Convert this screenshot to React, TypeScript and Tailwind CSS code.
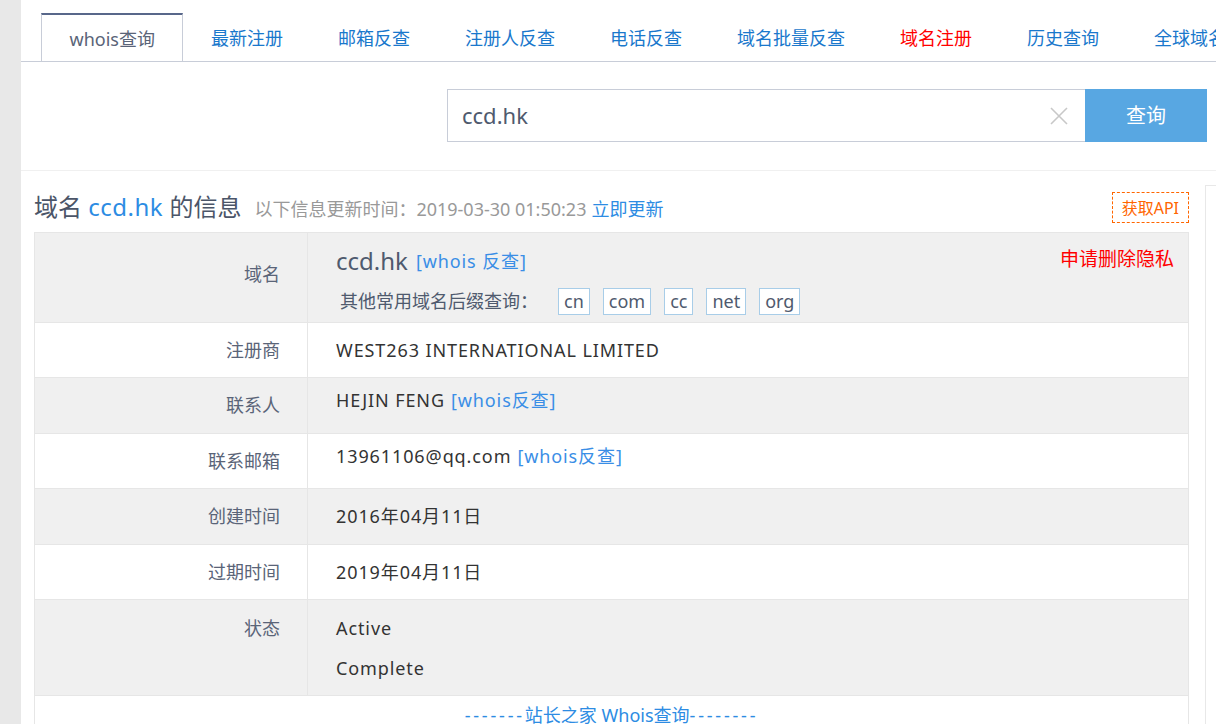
import React from "react";

const tabs = [
    {text: "whois查询", active: true},
    {text: "最新注册"},
    {text: "邮箱反查"},
    {text: "注册人反查"},
    {text: "电话反查"},
    {text: "域名批量反查"},
    {text: "域名注册", red: true},
    {text: "历史查询"},
    {text: "全球域名后缀"},
];

const suffixes = ["cn", "com", "cc", "net", "org"];

const Row = ({label, gray, children, top}: {label: string; gray?: boolean; children: React.ReactNode; top?: boolean}) => (
    <div className={`flex border-t border-[#e6e6e6] ${gray ? "bg-[#f0f0f0]" : "bg-white"}`}>
        <div
            className={`w-[272px] shrink-0 flex justify-end pr-[27px] text-[18px] text-[#5a6478] ${top ? "items-start pt-[8px] leading-[40px]" : "items-center"}`}>
            {label}
        </div>
        <div className="flex-1 border-l border-[#e6e6e6] pl-[28px] text-[18px] tracking-[0.05em] text-[#333]">
            {children}
        </div>
    </div>
);

export default function App() {
    return (
        <div
            className="flex min-h-[724px] w-[1216px] overflow-hidden bg-white font-['Noto_Sans','Noto_Sans_CJK_SC',sans-serif]">
            {/* left gray strip */}
            <div className="w-[21px] shrink-0 bg-[#e8e8e8]"/>

            <div className="flex-1 min-w-0">
                {/* tabs */}
                <div className="flex h-[62px] items-end border-b border-[#c8cdd8] pl-[20px] whitespace-nowrap overflow-hidden">
                    {tabs.map((tab, i) => (
                        <div
                            key={i}
                            className={
                                tab.active
                                    ? "h-[49px] -mb-px flex items-center px-[27.5px] pt-[2px] border-t-2 border-x border-t-[#58678a] border-x-[#c8cdd8] bg-white text-[18px] text-[#5a6478]"
                                    : `h-[49px] flex items-center px-[27.5px] pt-[3px] text-[18px] ${tab.red ? "text-[#f00]" : "text-[#1a78cc]"}`
                            }>
                            {tab.text}
                        </div>
                    ))}
                </div>

                {/* search */}
                <div className="border-b border-[#f0f0f0] pt-[27px] pb-[28px] pl-[426px]">
                    <div className="flex h-[53px]">
                        <div
                            className="flex w-[638px] items-center justify-between border border-[#c8cdd8] border-r-0 pl-[14px] pr-[16px]">
                            <span className="text-[22px] text-[#4f5a6e]">ccd.hk</span>
                            <svg width="20" height="20" viewBox="0 0 20 20" className="text-[#c8c8c8]">
                                <path d="M2 2 L18 18 M18 2 L2 18" stroke="currentColor" strokeWidth="1.6" fill="none"/>
                            </svg>
                        </div>
                        <div className="flex w-[122px] items-center justify-center bg-[#58a7e2] text-[20px] text-white">
                            查询
                        </div>
                    </div>
                </div>

                <div className="flex">
                    {/* main info */}
                    <div className="ml-[13px] w-[1155px] shrink-0">
                        <div className="flex h-[61px] items-center justify-between pt-[12px]">
                            <div className="flex items-baseline leading-[31px]">
                                <span className="text-[24px] text-[#4b5568]">域名 <span className="tracking-[0.5px] text-[#2d8ce3]">ccd.hk</span> 的信息</span>
                                <span className="ml-[13px] text-[18px] text-[#999]">以下信息更新时间：2019-03-30 01:50:23</span>
                                <span className="ml-[5px] text-[18px] text-[#2d8ce3]">立即更新</span>
                            </div>
                            <div
                                className="flex h-[31px] items-center border border-dashed border-[#ff6600] px-[9px] text-[16px] text-[#ff6600]">
                                获取API
                            </div>
                        </div>

                        <div className="border-x border-b border-[#e6e6e6]">
                            <div className="flex border-t border-[#e6e6e6] bg-[#f0f0f0]">
                                <div
                                    className="w-[272px] shrink-0 flex items-start justify-end pr-[27px] pt-[27px] leading-[28px] text-[18px] text-[#5a6478]">
                                    域名
                                </div>
                                <div className="relative flex-1 border-l border-[#e6e6e6] pl-[28px] pt-[12px] pb-[7px]">
                                    <div className="flex h-[32px] items-center">
                                        <span className="text-[24px] text-[#4f5a6e]">ccd.hk</span>
                                        <span className="ml-[8px] text-[18px] tracking-[0.05em] text-[#3a8ee6]">[whois 反查]</span>
                                    </div>
                                    <div className="mt-[11px] flex h-[27px] items-center">
                                        <span className="ml-[4px] text-[18px] text-[#4f5a6e]">其他常用域名后缀查询：</span>
                                        <div className="ml-[20px] flex gap-[13px]">
                                            {suffixes.map((s) => (
                                                <span
                                                    key={s}
                                                    className="flex h-[27px] items-center border border-[#a8cde8] bg-white px-[5px] text-[18px] text-[#4f5a6e]">
                                                    {s}
                                                </span>
                                            ))}
                                        </div>
                                    </div>
                                    <span className="absolute right-[14px] top-[10px] leading-[32px] text-[19px] text-[#f00]">申请删除隐私</span>
                                </div>
                            </div>

                            <Row label="注册商">
                                <div className="h-[54px] flex items-center">WEST263 INTERNATIONAL LIMITED</div>
                            </Row>
                            <Row label="联系人" gray>
                                <div className="h-[55px] flex items-center pb-[10px]">
                                    HEJIN FENG <span className="ml-[6px] text-[#3a8ee6]">[whois反查]</span>
                                </div>
                            </Row>
                            <Row label="联系邮箱">
                                <div className="h-[54px] flex items-center pb-[10px]">
                                    13961106@qq.com <span className="ml-[6px] text-[#3a8ee6]">[whois反查]</span>
                                </div>
                            </Row>
                            <Row label="创建时间" gray>
                                <div className="h-[55px] flex items-center">2016年04月11日</div>
                            </Row>
                            <Row label="过期时间">
                                <div className="h-[54px] flex items-center">2019年04月11日</div>
                            </Row>
                            <Row label="状态" gray top>
                                <div className="pt-[8px] pb-[7px] leading-[40px]">
                                    <div>Active</div>
                                    <div>Complete</div>
                                </div>
                            </Row>
                            <div className="border-t border-[#e6e6e6] bg-white text-center leading-[38px] text-[18px] text-[#2d8ce3]">
                                <span className="tracking-[2.8px]">-------</span>站长之家 Whois查询<span className="tracking-[2.8px]">--------</span>
                            </div>
                        </div>
                    </div>

                    {/* right side panel edge */}
                    <div className="ml-[16px] mt-[14px] h-[600px] flex-1 border-l border-t border-[#e8e8e8]"/>
                </div>
            </div>
        </div>
    );
}
